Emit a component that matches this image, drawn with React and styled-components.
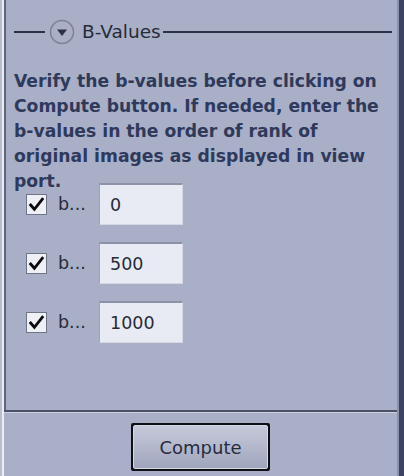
import React from "react";
import styled, { createGlobalStyle } from "styled-components";

const Global = createGlobalStyle`
  html, body { margin: 0; padding: 0; background: #a9afc6; }
  body { font-family: "DejaVu Sans", Verdana, sans-serif; }
`;

const Frame = styled.div`
  width: 404px;
  height: 476px;
  display: flex;
  background: #a9afc6;
  overflow: hidden;
`;

const LeftRail = styled.div`
  width: 4px;
  flex: none;
  background: linear-gradient(to right, #b7bccf 0 2px, #eceef4 2px 4px);
`;

const RightRail = styled.div`
  width: 7px;
  flex: none;
  background: linear-gradient(to right, #8a91aa 0 2px, #3c4363 2px 7px);
`;

const Main = styled.div`
  flex: 1;
  display: flex;
  flex-direction: column;
`;

const Upper = styled.div`
  height: 410px;
  flex: none;
  border-left: 2px solid #5f6679;
  box-sizing: border-box;
  padding: 19px 5px 0 8px;
`;

const Divider = styled.div`
  height: 3px;
  flex: none;
  border-top: 2px solid #4b5168;
  background: #cdd1df;
  box-sizing: border-box;
`;

const Bottom = styled.div`
  flex: 1;
  display: flex;
  justify-content: center;
  align-items: flex-start;
  padding-top: 10px;
`;

const Legend = styled.div`
  display: flex;
  align-items: center;
  height: 26px;
`;

const Rule = styled.div`
  height: 2px;
  background: #2c3144;
  flex: ${(p) => (p.$grow ? 1 : "none")};
  width: ${(p) => (p.$grow ? "auto" : "31px")};
`;

const Toggle = styled.svg`
  width: 26px;
  height: 26px;
  margin: 0 7px 0 4px;
  flex: none;
`;

const LegendText = styled.span`
  font-size: 18.5px;
  color: #262b3a;
  margin-right: 2px;
  line-height: 26px;
`;

const Note = styled.p`
  margin: 24px 0 0 0;
  padding: 0;
  font-weight: bold;
  font-size: 17.2px;
  line-height: 25px;
  color: #2e395c;
`;

const List = styled.div`
  display: flex;
  flex-direction: column;
  gap: 17px;
  margin-top: -11px;
  padding-left: 12px;
`;

const Row = styled.div`
  display: flex;
  align-items: center;
  height: 42px;
`;

const Check = styled.div`
  width: 21px;
  height: 21px;
  box-sizing: border-box;
  border: 1px solid #6e7589;
  background: #eef0f6;
  display: flex;
  align-items: center;
  justify-content: center;
  flex: none;
`;

const Label = styled.span`
  font-size: 17.5px;
  color: #262b3a;
  margin-left: 11px;
  width: 41px;
`;

const Field = styled.div`
  width: 84px;
  height: 42px;
  box-sizing: border-box;
  background: #e9ebf4;
  border-top: 2px solid #8c93a8;
  border-left: 1px solid #9ea4b8;
  border-right: 1px solid #d5d8e3;
  border-bottom: 1px solid #d5d8e3;
  display: flex;
  align-items: center;
  padding-left: 10px;
  font-size: 17.5px;
  color: #262b3a;
`;

const Button = styled.button`
  width: 139px;
  height: 48px;
  box-sizing: border-box;
  border: 2px solid #0d0f14;
  border-radius: 2px;
  padding: 0;
  background: #0d0f14;
  display: flex;
  cursor: pointer;
`;

const ButtonFace = styled.span`
  flex: 1;
  display: flex;
  align-items: center;
  justify-content: center;
  border: 1px solid #d4d7e4;
  border-radius: 2px;
  background: linear-gradient(to bottom, #c5c9da, #b1b6ca 55%, #9fa5bc);
  font-family: "DejaVu Sans", Verdana, sans-serif;
  font-size: 18px;
  color: #262c3f;
`;

const CheckMark = () => (
  <svg width="17" height="17" viewBox="0 0 16 16">
    <path d="M2.5 8.5 L6 12.5 L13.5 3" fill="none" stroke="#0b0b0b" strokeWidth="2.6" strokeLinecap="square" />
  </svg>
);

const values = ["0", "500", "1000"];

export default function App() {
  return (
    <>
      <Global />
      <Frame>
        <LeftRail />
        <Main>
          <Upper>
            <Legend>
              <Rule />
              <Toggle viewBox="0 0 26 26">
                <circle cx="13" cy="13" r="11.5" fill="none" stroke="#7d8296" strokeWidth="1.5" />
                <path d="M8 10.5 L18 10.5 L13 17 Z" fill="#2c3144" />
              </Toggle>
              <LegendText>B-Values</LegendText>
              <Rule $grow />
            </Legend>
            <Note>
              Verify the b-values before clicking on Compute button. If needed, enter the
              b-values in the order of rank of original images as displayed in view port.
            </Note>
            <List>
              {values.map((v) => (
                <Row key={v}>
                  <Check>
                    <CheckMark />
                  </Check>
                  <Label>b...</Label>
                  <Field>{v}</Field>
                </Row>
              ))}
            </List>
          </Upper>
          <Divider />
          <Bottom>
            <Button>
              <ButtonFace>Compute</ButtonFace>
            </Button>
          </Bottom>
        </Main>
        <RightRail />
      </Frame>
    </>
  );
}
